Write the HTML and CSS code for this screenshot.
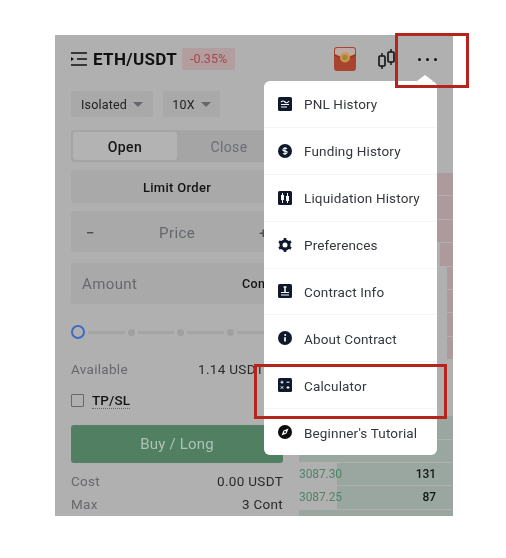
FILE: index.html

```html
<!DOCTYPE html>
<html lang="en">
<head>
<meta charset="utf-8"/>
<title>ETH/USDT</title>
<link rel="stylesheet" href="styles.css">
</head>
<body>
<div class="phone">
  <div class="header">
    <svg class="menu-toggle" width="16" height="14" viewBox="0 0 16 14"><path d="M0 1h16M6 7h10M0 13h16" stroke="#111" stroke-width="1.5" fill="none"/><path d="M0 5l3 2-3 2z" fill="#111"/></svg>
    <span class="pair">ETH/USDT</span>
    <span class="change">-0.35%</span>
    <svg class="packet" width="22" height="24" viewBox="0 0 22 24"><rect width="22" height="24" rx="3" fill="#a9452f"/><path d="M1 3a2 2 0 0 1 2-2h16a2 2 0 0 1 2 2v4q-10 6-20 0z" fill="#bfa9a2"/><path d="M0 8q11 7 22 0" stroke="#8f3524" fill="none"/><circle cx="11" cy="10.500" r="5" fill="#c29a4a"/><circle cx="11" cy="10.500" r="2.600" fill="#a98237"/></svg>
    <svg class="candles" width="19" height="20" viewBox="0 0 19 20"><path d="M5 4v16M14 0v16" stroke="#111" stroke-width="1.4"/><rect x="2" y="7" width="6" height="10" rx="1" fill="#b0b0b0" stroke="#111" stroke-width="1.6"/><rect x="11" y="3" width="6" height="10" rx="1" fill="#b0b0b0" stroke="#111" stroke-width="1.6"/></svg>
    <span class="dots"><i></i><i></i><i></i></span>
  </div>
  <div class="content">
    <div class="trade">
      <div class="pills">
        <div class="pill pill-margin">Isolated <b class="arrow"></b></div>
        <div class="pill pill-lev">10X <b class="arrow"></b></div>
      </div>
      <div class="tabs">
        <div class="tab active">Open</div>
        <div class="tab">Close</div>
      </div>
      <div class="order-type">Limit Order</div>
      <div class="price"><span class="step">−</span><span>Price</span><span class="step">+</span></div>
      <div class="amount"><span>Amount</span><span class="unit">Cont</span></div>
      <div class="slider">
        <span class="knob"></span><span class="seg"></span><span class="dot"></span><span class="seg"></span><span class="dot"></span><span class="seg"></span><span class="dot"></span><span class="seg"></span><span class="dot"></span>
      </div>
      <div class="line available"><span class="muted">Available</span><span>1.14 USDT</span></div>
      <div class="tpsl"><span class="check"></span><span class="tpsl-label">TP/SL</span></div>
      <div class="buy">Buy / Long</div>
      <div class="line cost"><span class="muted">Cost</span><span>0.00 USDT</span></div>
      <div class="line max"><span class="muted">Max</span><span>3 Cont</span></div>
    </div>
    <div class="book">
      <div class="row"><span class="bar sell" style="width:100%"></span></div>
      <div class="row"><span class="bar sell" style="width:100%"></span></div>
      <div class="row"><span class="bar sell" style="width:100%"></span></div>
      <div class="row"><span class="bar sell" style="width:13px"></span></div>
      <div class="row"><span class="bar sell" style="width:6px"></span></div>
      <div class="row"><span class="bar sell" style="width:6px"></span></div>
      <div class="row"><span class="bar sell" style="width:6px"></span></div>
      <div class="row"><span class="bar sell" style="width:6px"></span></div>
      <div class="mid"></div>
      <div class="row"><span class="bar buy-bar" style="width:100%"></span></div>
      <div class="row"><span class="bar buy-bar" style="width:100%"></span></div>
      <div class="row"><span class="bar buy-bar" style="width:116px"></span><span class="px">3087.30</span><span class="qty">131</span></div>
      <div class="row"><span class="bar buy-bar" style="width:116px"></span><span class="px">3087.25</span><span class="qty">87</span></div>
      <div class="row"><span class="bar buy-bar" style="width:100%"></span><span class="px">3087.20</span><span class="qty">10.00K</span></div>
    </div>
  </div>

  <div class="menu">
    <span class="caret"></span>
    <div class="item">
      <svg class="icon" viewBox="0 0 14 14"><rect width="14" height="14" rx="1.5" fill="#0e1a2b"/><path d="M3 5q2-2 4 0t4-1M3 7.500h8M3 10h6" stroke="#fff" stroke-width="1.1" fill="none"/></svg>
      <span>PNL History</span>
    </div>
    <div class="item">
      <svg class="icon" viewBox="0 0 14 14"><circle cx="7" cy="7" r="7" fill="#0e1a2b"/><path d="M9 4.800Q8.500 4 7 4T5 5.400 7 7t2 1.600T7 10t-2-.8M7 3v8" stroke="#fff" stroke-width="1.1" fill="none"/></svg>
      <span>Funding History</span>
    </div>
    <div class="item">
      <svg class="icon" viewBox="0 0 14 14"><rect width="14" height="14" rx="1.5" fill="#0e1a2b"/><path d="M4.500 2v10M9.500 2v10" stroke="#fff" stroke-width="1"/><rect x="3" y="4" width="3" height="5" fill="#fff"/><rect x="8" y="5" width="3" height="5" fill="#fff"/></svg>
      <span>Liquidation History</span>
    </div>
    <div class="item">
      <svg class="icon" viewBox="0 0 14 14"><circle cx="7" cy="7" r="4" fill="none" stroke="#0e1a2b" stroke-width="3"/><path d="M7 0v3M7 11v3M1 3.500l2.600 1.500M10.400 9l2.600 1.500M1 10.500L3.600 9M10.400 5L13 3.500" stroke="#0e1a2b" stroke-width="2.600"/></svg>
      <span>Preferences</span>
    </div>
    <div class="item">
      <svg class="icon" viewBox="0 0 14 14"><rect width="14" height="14" rx="1.5" fill="#0e1a2b"/><path d="M7 3v5M5.600 3h2.800" stroke="#fff" stroke-width="1.5"/><path d="M3 8.500h8M3 11h8" stroke="#fff" stroke-width="1.2"/></svg>
      <span>Contract Info</span>
    </div>
    <div class="item">
      <svg class="icon" viewBox="0 0 14 14"><circle cx="7" cy="7" r="7" fill="#0e1a2b"/><path d="M7 6.200V10.500" stroke="#fff" stroke-width="1.7"/><circle cx="7.200" cy="4" r="1" fill="#fff"/></svg>
      <span>About Contract</span>
    </div>
    <div class="item">
      <svg class="icon" viewBox="0 0 14 14"><rect width="14" height="14" rx="1.5" fill="#0e1a2b"/><path d="M2.500 4.200h3M4 2.700v3M8.500 4.200h3M2.800 8.300l2.400 2.400M5.200 8.300l-2.400 2.400M8.500 9.500h3M10 8v3" stroke="#fff" stroke-width="1"/></svg>
      <span>Calculator</span>
    </div>
    <div class="item">
      <svg class="icon" viewBox="0 0 14 14"><circle cx="7" cy="7" r="7" fill="#0a0a0a"/><path d="M10.500 3.500L8.500 8.500 3.500 10.500 5.500 5.500z" fill="#fff"/><circle cx="7" cy="7" r="1" fill="#0a0a0a"/></svg>
      <span>Beginner's Tutorial</span>
    </div>
  </div>
</div>
<div class="mark mark-more"></div>
<div class="mark mark-calc"></div>
</body>
</html>
```

FILE: styles.css

```css
* { box-sizing: border-box; }
body { margin: 0; background: #fff; font-family: "Roboto", "Liberation Sans", sans-serif; color: #141414; height: 558px; overflow: hidden; }

.phone {
  position: relative;
  width: 398px;
  height: 481px;
  margin: 35px 0 0 55px;
  background: #b0b0b0;
  overflow: hidden;
  font-size: 13px;
  letter-spacing: 0.4px;
  filter: blur(0.35px);
}

.header { display: flex; align-items: center; height: 48px; padding: 0 16px; }
.menu-toggle { margin-right: 6px; }
.pair { font-size: 17px; font-weight: 700; letter-spacing: 0.35px; color: #111; }
.change { margin-left: 5px; width: 53px; height: 22px; line-height: 22px; text-align: center; background: #b29e9e; color: #a8474c; font-size: 12.5px; border-radius: 2px; letter-spacing: 0; }
.packet { margin-left: auto; }
.candles { margin-left: 21px; }
.dots { display: flex; gap: 5px; margin-left: 22px; }
.dots i { width: 3px; height: 3px; border-radius: 50%; background: #111; }

.content { display: flex; }
.trade { width: 212px; margin-left: 16px; flex: none; }

.pills { display: flex; gap: 10px; margin-top: 8px; }
.pill { height: 26px; background: #a9a9a9; border-radius: 2px; display: flex; align-items: center; justify-content: center; gap: 6px; font-size: 12.5px; letter-spacing: 0.2px; color: #222; }
.pill-margin { width: 82px; }
.pill-lev { width: 57px; }
.arrow { width: 0; height: 0; border: 5px solid transparent; border-top: 5px solid #64676d; border-bottom: 0; }

.tabs { display: flex; height: 32px; margin-top: 13px; padding: 2px; background: #a5a5a5; border-radius: 3px; }
.tab { flex: 1; display: flex; align-items: center; justify-content: center; padding-top: 1px; font-size: 14px; color: #6b6e73; }
.tab.active { background: #b3b3b3; border-radius: 3px; color: #141414; font-weight: 500; }

.order-type { height: 33px; margin-top: 8px; padding-top: 1px; background: #a9a9a9; border-radius: 3px; display: flex; align-items: center; justify-content: center; font-size: 13px; font-weight: 500; letter-spacing: 0.3px; }

.price { height: 41px; margin-top: 8px; padding: 2px 15px 0; background: #a9a9a9; border-radius: 3px; display: flex; align-items: center; justify-content: space-between; font-size: 15px; color: #64676d; }
.step { color: #4c4e52; font-weight: 500; }

.amount { height: 41px; margin-top: 11px; padding: 0 13px 0 11px; background: #a9a9a9; border-radius: 3px; display: flex; align-items: center; justify-content: space-between; font-size: 15px; color: #66686c; }
.unit { font-size: 12.5px; font-weight: 500; color: #141414; }

.slider { display: flex; align-items: center; gap: 3px; height: 14px; margin-top: 21px; }
.knob { width: 14px; height: 14px; border-radius: 50%; border: 2px solid #3f6bc5; flex: none; }
.seg { flex: 1; height: 3px; background: #a4a4a4; }
.dot { width: 7px; height: 7px; border-radius: 50%; background: #a0a0a0; flex: none; }

.line { display: flex; justify-content: space-between; align-items: center; height: 18px; font-size: 13.5px; letter-spacing: 0.3px; color: #2a2a2a; }
.muted { color: #66686c; }
.available { margin-top: 21px; padding-right: 19px; }
.cost { margin-top: 9px; }
.max { margin-top: 5px; }

.tpsl { display: flex; align-items: center; gap: 8px; height: 18px; margin-top: 13px; }
.check { width: 13px; height: 13px; border: 1px solid #66686c; border-radius: 1px; }
.tpsl-label { font-size: 13.5px; letter-spacing: 0.1px; font-weight: 500; color: #141414; border-bottom: 1px dotted #66686c; }

.buy { height: 38px; margin-top: 16px; background: #517f62; border-radius: 3px; display: flex; align-items: center; justify-content: center; font-size: 15px; letter-spacing: 0.2px; color: #afc2b6; }

.book { flex: 1; margin-left: 16px; margin-top: 90px; display: flex; flex-direction: column; gap: 1px; }
.row { position: relative; flex: none; height: 22.400px; display: flex; justify-content: space-between; align-items: center; font-size: 12px; letter-spacing: -0.1px; padding-right: 17px; }
.bar { position: absolute; top: 0; bottom: 0; right: 0; }
.sell { background: #ad9a9c; }
.buy-bar { background: #9aa6a0; }
.px { position: relative; color: #4f8467; }
.qty { position: relative; color: #141414; font-weight: 500; }
.mid { flex: none; height: 55px; }

.menu {
  position: absolute;
  left: 209px;
  top: 46px;
  width: 173px;
  height: 374px;
  background: #fff;
  border-radius: 6px;
  display: flex;
  flex-direction: column;
}
.caret { position: absolute; top: -6px; right: 4px; border: 8px solid transparent; border-top: 0; border-bottom: 6px solid #fff; }
.item { flex: 1; display: flex; align-items: center; gap: 12px; padding: 1px 0 0 14px; font-size: 13.5px; letter-spacing: 0.15px; color: #34383e; border-bottom: 1px solid #f5f5f5; }
.item:last-child { border-bottom: 0; }
.icon { width: 14px; height: 14px; flex: none; margin-top: -1px; }

.mark { position: absolute; border: 3px solid #b5251d; }
.mark-more { left: 395px; top: 33px; width: 74px; height: 55px; }
.mark-calc { left: 254px; top: 364px; width: 193px; height: 55px; }
```
